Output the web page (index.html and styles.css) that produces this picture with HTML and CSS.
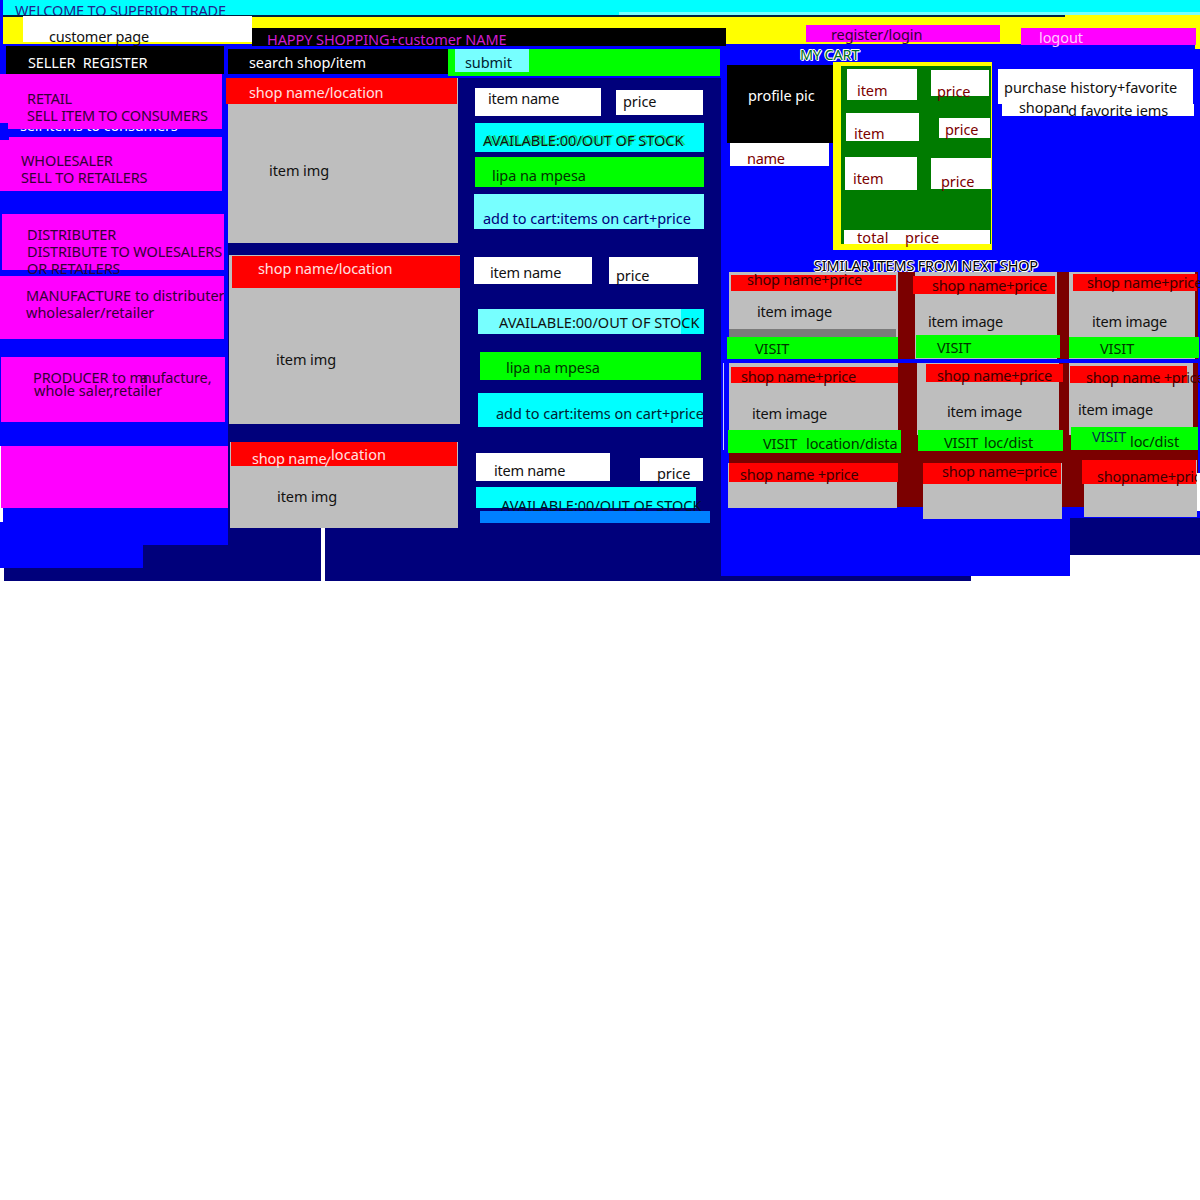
FILE: index.html
```html
<!DOCTYPE html>
<html lang="en">
<head>
<meta charset="utf-8">
<title>Superior Trade</title>
<link rel="stylesheet" href="styles.css">
</head>
<body>
<div class="page">
  <header>
    <div class="welcome"><p>WELCOME TO SUPERIOR TRADE</p></div>
    <div class="rule"></div>
    <div class="band">
      <div class="customer white"><p>customer page</p></div>
      <div class="happy"><p>HAPPY SHOPPING+customer NAME</p></div>
      <div class="login magenta"><p>register/login</p></div>
      <div class="logout magenta"><p>logout</p></div>
    </div>
  </header>
  <main>
    <aside class="sellers">
      <div class="seller-panel">
        <div class="seller-title"><p>SELLER&nbsp; REGISTER</p></div>
        <div class="s1 magenta"><p>RETAIL<br>SELL ITEM TO CONSUMERS</p></div>
        <div class="cut"><p>sell items to consumers</p></div>
        <div class="s2 magenta"><p>WHOLESALER<br>SELL TO RETAILERS</p></div>
        <div class="s3 magenta"><p>DISTRIBUTER<br>DISTRIBUTE TO WOLESALERS<br>OR RETAILERS</p></div>
        <div class="s4 magenta"><p>MANUFACTURE to distributer<br>wholesaler/retailer</p></div>
        <div class="s5 magenta"><p>PRODUCER to m<span class="over">a</span>nufacture,</p><p class="second">whole saler,retailer</p></div>
        <div class="s6 magenta"></div>
        <div class="notch white"></div>
      </div>
      <div class="seller-foot"><div class="step"></div></div>
    </aside>

    <section class="shop">
      <div class="search-row">
        <div class="search"><p>search shop/item</p></div>
        <div class="search-rest lime"><div class="submit pale"><p>submit</p></div></div>
      </div>
      <div class="products">
        <div class="product p1">
          <div class="figure"><div class="name red"><p>shop name/location</p></div><p class="img">item img</p></div>
          <div class="controls">
            <div class="pair"><div class="item white"><p>item name</p></div><div class="price white"><p>price</p></div></div>
            <div class="stock cyan"><p>AVAILABLE:00/OUT OF STOCK</p></div>
            <div class="pay lime"><p>lipa na mpesa</p></div>
            <div class="add pale"><p>add to cart:items on cart+price</p></div>
          </div>
        </div>
        <div class="product p2">
          <div class="figure"><div class="name red"><p>shop name/location</p></div><p class="img">item img</p></div>
          <div class="controls">
            <div class="pair"><div class="item white"><p>item name</p></div><div class="price white"><p>price</p></div></div>
            <div class="stock"><p>AVAILABLE:00/OUT OF STOCK</p></div>
            <div class="pay lime"><p>lipa na mpesa</p></div>
            <div class="add cyan"><p>add to cart:items on cart+price</p></div>
          </div>
        </div>
        <div class="product p3">
          <div class="figure"><div class="name red"><p>shop name</p><p class="slash">/</p><p class="loc">location</p></div><p class="img">item img</p></div>
          <div class="controls">
            <div class="pair"><div class="item white"><p>item name</p></div><div class="price white"><p>price</p></div></div>
            <div class="stock cyan"><p>AVAILABLE:00/OUT OF STOCK</p></div>
            <div class="strip"></div>
          </div>
        </div>
        <div class="gap white"></div>
      </div>
    </section>

    <section class="account">
      <div class="cart-title"><p>MY CART</p></div>
      <div class="account-row">
        <div class="profile">
          <div class="pic"><p>profile pic</p></div>
          <div class="user white"><p>name</p></div>
        </div>
        <div class="cart">
          <div class="cart-body">
            <div class="line l1"><div class="ci white"><p>item</p></div><div class="cp white"><p>price</p></div></div>
            <div class="line l2"><div class="ci white"><p>item</p></div><div class="cp white"><p>price</p></div></div>
            <div class="line l3"><div class="ci white"><p>item</p></div><div class="cp white"><p>price</p></div></div>
            <div class="total white"><p>total</p><p>price</p></div>
          </div>
        </div>
        <div class="history">
          <div class="h1 white"><p>purchase history+favorite</p></div>
          <div class="h2 white"><p>shopan</p><p class="low">d favorite iems</p></div>
        </div>
      </div>
      <div class="similar-title"><p>SIMILAR ITEMS FROM NEXT SHOP</p></div>
      <div class="market">
        <div class="row r1">
          <div class="card c1"><div class="tag red"><p>shop name+price</p></div><p class="pic-label">item image</p><div class="shade"></div><div class="visit lime"><p>VISIT</p></div></div>
          <div class="card c2"><div class="tag red"><p>shop name+price</p></div><p class="pic-label">item image</p><div class="visit lime"><p>VISIT</p></div></div>
          <div class="card c3"><div class="tag red"><p>shop name+price</p></div><p class="pic-label">item image</p><div class="visit lime"><p>VISIT</p></div></div>
        </div>
        <div class="divider"></div>
        <div class="row r2">
          <div class="card c1"><div class="tag red"><p>shop name+price</p></div><p class="pic-label">item image</p><div class="visit lime"><p>VISIT</p><p class="far">location/dista</p></div></div>
          <div class="card c2"><div class="tag red"><p>shop name+price</p></div><p class="pic-label">item image</p><div class="visit lime"><p>VISIT</p><p class="far">loc/dist</p></div></div>
          <div class="card c3"><div class="tag red"><p>shop name +price</p></div><p class="pic-label">item image</p><div class="visit lime"><p>VISIT</p><p class="far">loc/dist</p></div></div>
        </div>
        <div class="row r3">
          <div class="card c1"><div class="tag red"><p>shop name +price</p></div></div>
          <div class="card c2"><div class="tag red"><p>shop name=price</p></div></div>
          <div class="card c3"><div class="tag red"><p>shopname+price</p></div></div>
          <div class="edge white"></div>
        </div>
      </div>
      <div class="account-foot"><div class="under"></div><div class="corner"></div></div>
    </section>
  </main>
</div>
</body>
</html>
```
FILE: styles.css
```css
* { box-sizing: border-box; }
body { margin: 0; background: #fff; }
.page {
  width: 1200px; height: 1200px; overflow: hidden;
  font: 14.5px/17px "Noto Sans", sans-serif; color: #111;
  letter-spacing: -0.08px; white-space: nowrap;
}
p { margin: 0; width: max-content; flex: none; }
div { flex: none; }
.white { background: #fff; }
.magenta { background: #f0f; color: #350035; }
.lime { background: #0f0; color: #030; }
.cyan { background: #0ff; }
.pale { background: #7ff; }
.red { background: #f00; }

/* header */
header { position: relative; z-index: 1; display: flex; flex-direction: column; height: 44px; background: #ff0; border-left: 3px solid #00f; }
.welcome { height: 15px; background: linear-gradient(#7ff, #7ff) 616px 12px / 581px 3px no-repeat #0ff; overflow: hidden; color: #22228a; letter-spacing: -0.18px; }
.welcome p { margin: 2px 0 0 12px; }
.rule { width: 1062px; height: 2px; background: #002040; }
.band { display: flex; align-items: flex-start; height: 27px; }
.customer { width: 229px; height: 26px; margin: -1px 0 0 20px; letter-spacing: -0.2px; }
.customer p { margin: 12px 0 0 26px; }
.happy { width: 474px; height: 18px; margin-top: 11px; background: #000; color: #d01cd0; }
.happy p { margin: 3px 0 0 15px; }
.login { width: 194px; height: 17px; margin: 8px 0 0 80px; }
.login p { margin: 1px 0 0 25px; }
.logout { width: 175px; height: 17px; margin: 11px 0 0 21px; color: #ffc8ff; }
.logout p { margin: 1px 0 0 18px; }
.welcome, .customer, .happy, .login, .logout { display: flow-root; }

main { display: flex; align-items: flex-start; height: 537px; }

/* seller list */
.sellers { width: 228px; flex: none; letter-spacing: -0.14px; }
.seller-panel { display: flex; flex-direction: column; align-items: flex-start; height: 501px; background: #00f; }
.seller-panel > div { display: flow-root; }
.seller-title { width: 218px; height: 28px; margin: 2px 0 0 6px; background: #000; color: #fff; }
.seller-title p { margin: 8px 0 0 22px; }
.s1 { width: 222px; height: 55px; background: linear-gradient(#00f, #00f) 0 100% / 8px 6px no-repeat #f0f; }
.s1 p { margin: 16px 0 0 27px; }
.cut { height: 3px; margin-left: 20px; overflow: hidden; color: #fff; }
.cut p { margin-top: -12px; }
.s2 { width: 222px; height: 54px; margin-top: 5px; background: linear-gradient(#00f, #00f) 0 0 / 9px 3px no-repeat #f0f; }
.s2 p { margin: 15px 0 0 21px; }
.s3 { width: 222px; height: 56px; margin: 23px 0 0 2px; }
.s3 p { margin: 12px 0 0 25px; }
.s4 { width: 224px; height: 63px; margin-top: 6px; letter-spacing: 0; }
.s4 p { margin: 11px 0 0 26px; }
.s5 { width: 224px; height: 65px; margin: 18px 0 0 1px; }
.s5 p { margin: 12px 0 0 32px; }
.s5 .second { margin: -4px 0 0 33px; letter-spacing: 0; }
.over { margin: 0 -5px 0 -3px; }
.s6 { width: 229px; height: 62px; margin-top: 24px; border-left: 1px solid #fff; }
.notch { width: 3px; height: 14px; }
.seller-foot { height: 36px; margin-left: 4px; background: #00007b; }
.step { width: 143px; height: 23px; margin-left: -4px; background: #00f; }

/* products */
.shop { width: 493px; flex: none; display: flex; flex-direction: column; background: #00007b; }
.search-row { display: flex; align-items: flex-start; height: 34px; padding-top: 5px; background: #00f; }
.search { display: flow-root; width: 220px; height: 25px; background: #000; color: #fff; }
.search p { margin: 5px 0 0 21px; }
.search-rest { width: 272px; height: 27px; padding-left: 7px; }
.submit { display: flow-root; width: 74px; height: 23px; color: #023; }
.submit p { margin: 5px 0 0 10px; }
.products { height: 503px; }
.product { display: flex; align-items: flex-start; }
.p1 { height: 177px; }
.p2 { height: 187px; }
.p3 { height: 86px; }
.figure { display: flow-root; background: #bebebe; flex: none; }
.name { display: flow-root; color: #ffe0e0; }
.controls { display: flex; flex-direction: column; align-items: flex-start; }
.controls .pair { display: flex; align-items: flex-start; }
.item, .price, .stock, .pay, .add { display: flow-root; }
.item { letter-spacing: -0.25px; }
.stock { letter-spacing: 0; }
.add { letter-spacing: -0.04px; }

.p1 .figure { width: 230px; height: 165px; }
.p1 .name { width: 231px; height: 26px; margin-left: -2px; }
.p1 .name p { margin: 6px 0 0 23px; }
.p1 .img { margin: 58px 0 0 41px; }
.p1 .controls { margin: 10px 0 0 16px; }
.p1 .item { width: 126px; height: 28px; margin-left: 1px; }
.p1 .item p { margin: 2px 0 0 13px; }
.p1 .price { width: 87px; height: 25px; margin: 2px 0 0 15px; }
.p1 .price p { margin: 3px 0 0 7px; }
.p1 .stock { width: 229px; height: 29px; margin: 7px 0 0 1px; }
.p1 .stock p { margin: 9px 0 0 8px; text-shadow: 2px -1px #00e070; }
.p1 .pay { width: 229px; height: 30px; margin: 5px 0 0 1px; }
.p1 .pay p { margin: 10px 0 0 17px; }
.p1 .add { width: 230px; height: 35px; margin-top: 7px; color: #00007b; }
.p1 .add p { margin: 16px 0 0 9px; }

.p2 .figure { width: 231px; height: 169px; margin-left: 1px; }
.p2 .name { width: 228px; height: 32px; margin: 1px 0 0 3px; }
.p2 .name p { margin: 4px 0 0 26px; }
.p2 .img { margin: 63px 0 0 47px; }
.p2 .controls { margin: 2px 0 0 14px; }
.p2 .item { width: 118px; height: 27px; }
.p2 .item p { margin: 7px 0 0 16px; }
.p2 .price { width: 89px; height: 27px; margin-left: 17px; }
.p2 .price p { margin: 10px 0 0 7px; }
.p2 .stock { width: 226px; height: 25px; margin: 25px 0 0 4px; background: linear-gradient(90deg, #7ff 203px, #0ff 203px); }
.p2 .stock p { margin: 5px 0 0 21px; }
.p2 .pay { width: 221px; height: 28px; margin: 18px 0 0 6px; }
.p2 .pay p { margin: 7px 0 0 26px; }
.p2 .add { width: 225px; height: 34px; margin: 13px 0 0 4px; color: #023; }
.p2 .add p { margin: 12px 0 0 18px; }

.p3 .figure { width: 228px; height: 86px; margin-left: 2px; }
.p3 .name { display: flex; align-items: flex-start; width: 226px; height: 24px; margin-left: 1px; padding-left: 21px; }
.p3 .name p { margin-top: 8px; width: 73px; letter-spacing: -0.2px; }
.p3 .name .slash { width: 6px; margin-top: 11px; transform: skewX(-6deg); }
.p3 .name .loc { margin-top: 4px; width: auto; letter-spacing: 0.1px; }
.p3 .img { margin: 22px 0 0 47px; }
.p3 .controls { margin: 11px 0 0 18px; }
.p3 .item { width: 134px; height: 28px; }
.p3 .item p { margin: 9px 0 0 18px; }
.p3 .price { width: 63px; height: 23px; margin: 5px 0 0 30px; }
.p3 .price p { margin: 7px 0 0 17px; }
.p3 .stock { width: 220px; height: 21px; margin-top: 6px; color: #012; }
.p3 .stock p { margin: 10px 0 0 25px; }
.strip { width: 230px; height: 12px; margin: 3px 0 0 4px; background: #0080ff; }
.gap { width: 4px; height: 53px; margin-left: 93px; }

/* account */
.account { width: 479px; height: 537px; flex: none; display: flex; flex-direction: column; background: linear-gradient(#ccf, #ccf) 2px 318px / 1px 88px no-repeat, linear-gradient(#ff0, #ff0) 100% 0 / 5px 5px no-repeat #00f; }
.cart-title { display: flow-root; height: 18px; color: #006b20; }
.cart-title p { margin: 2px 0 0 79px; }
.cart-title p, .similar-title p { text-shadow: 1px 0 #fff, -1px 0 #fff, 0 1px #fff, 0 -1px #fff, 1px 1px #fff, -1px -1px #fff; letter-spacing: -0.2px; }
.account-row { display: flex; align-items: flex-start; height: 195px; }
.profile { width: 106px; margin: 3px 0 0 6px; }
.pic { display: flow-root; height: 78px; background: #000; color: #fff; }
.pic p { margin: 22px 0 0 21px; }
.user { display: flow-root; width: 99px; height: 23px; margin-left: 3px; color: #7b0000; letter-spacing: -0.3px; }
.user p { margin: 7px 0 0 17px; }
.cart { width: 159px; height: 188px; padding: 4px 1px 6px 8px; background: #ff0; color: #7b0000; }
.cart-body { display: flex; flex-direction: column; height: 178px; background: #007b00; }
.line { display: flex; align-items: flex-start; }
.ci, .cp { display: flow-root; }
.l1 { height: 47px; padding: 3px 0 0 6px; }
.l1 .ci { width: 70px; height: 31px; }
.l1 .ci p { margin: 13px 0 0 10px; }
.l1 .cp { width: 58px; height: 26px; margin: 1px 0 0 14px; }
.l1 .cp p { margin: 13px 0 0 6px; }
.l2 { height: 44px; padding-left: 5px; }
.l2 .ci { width: 73px; height: 28px; }
.l2 .ci p { margin: 12px 0 0 8px; }
.l2 .cp { width: 51px; height: 20px; margin: 5px 0 0 20px; }
.l2 .cp p { margin: 3px 0 0 6px; }
.l3 { height: 73px; padding-left: 4px; }
.l3 .ci { width: 72px; height: 33px; }
.l3 .ci p { margin: 13px 0 0 8px; }
.l3 .cp { width: 60px; height: 31px; margin: 1px 0 0 14px; }
.l3 .cp p { margin: 15px 0 0 10px; }
.total { display: flex; width: 146px; height: 14px; margin-left: 3px; padding-left: 13px; }
.total p { width: 48px; margin-top: -1px; letter-spacing: 0.1px; }
.history { margin: 7px 0 0 6px; }
.h1 { display: flow-root; width: 195px; height: 35px; }
.h1 p { margin: 10px 0 0 6px; letter-spacing: -0.04px; }
.h2 { display: flex; width: 192px; height: 12px; margin-left: 4px; padding-left: 17px; }
.h2 p { width: 49px; margin-top: -5px; }
.h2 .low { height: 14px; margin-top: -2px; overflow: hidden; width: 115px; }
.similar-title { display: flow-root; height: 15px; overflow: hidden; color: #000; }
.similar-title p { margin-left: 93px; }

/* neighbouring shops */
.market { width: 469px; height: 235px; margin-left: 8px; background: #7b0000; }
.row { display: flex; align-items: flex-start; }
.card { background: #bebebe; }
.card, .tag, .visit { display: flow-root; }
.tag { color: #3c0000; letter-spacing: -0.22px; }
.pic-label { letter-spacing: -0.2px; }
.divider { width: 479px; height: 4px; margin-left: -8px; background: #00f; }
.r1 { height: 87px; }
.r1 .card { height: 87px; }
.r1 .c1 { width: 169px; }
.r1 .c1 .tag { width: 165px; height: 16px; margin: 3px 0 0 2px; }
.r1 .c1 .tag p { margin: -4px 0 0 16px; }
.r1 .c1 .pic-label { margin: 12px 0 0 28px; }
.shade { width: 167px; height: 8px; margin-top: 9px; background: #7b7b7b; }
.r1 .c1 .visit { width: 171px; height: 22px; margin-left: -2px; }
.r1 .c1 .visit p { margin: 3px 0 0 28px; }
.r1 .c2 { width: 142px; margin-left: 17px; }
.r1 .c2 .tag { width: 142px; height: 18px; margin: 4px 0 0 -2px; }
.r1 .c2 .tag p { margin: 1px 0 0 19px; }
.r1 .c2 .pic-label { margin: 19px 0 0 13px; }
.r1 .c2 .visit { width: 144px; height: 23px; margin: 5px 0 0 1px; }
.r1 .c2 .visit p { margin: 4px 0 0 21px; }
.r1 .c3 { width: 126px; margin-left: 12px; }
.r1 .c3 .tag { width: 124px; height: 17px; margin: 2px 0 0 4px; }
.r1 .c3 .tag p { margin: 0 0 0 14px; }
.r1 .c3 .pic-label { margin: 22px 0 0 23px; }
.r1 .c3 .visit { width: 130px; height: 21px; margin-top: 7px; }
.r1 .c3 .visit p { margin: 3px 0 0 31px; }

.r2 { height: 97px; }
.r2 .card { height: 72px; }
.r2 .visit { display: flex; align-items: flex-start; }
.r2 .c1 { width: 169px; }
.r2 .c1 .tag { width: 167px; height: 16px; margin: 4px 0 0 2px; }
.r2 .c1 .tag p { margin: 1px 0 0 10px; }
.r2 .c1 .pic-label { margin: 22px 0 0 23px; }
.r2 .c1 .visit { width: 173px; height: 23px; margin: 8px 0 0 -1px; padding: 5px 0 0 35px; }
.r2 .c1 .visit p { width: 43px; }
.r2 .c1 .visit .far { width: auto; }
.r2 .c2 { width: 142px; margin-left: 19px; }
.r2 .c2 .tag { width: 137px; height: 18px; margin: 1px 0 0 9px; }
.r2 .c2 .tag p { margin: 3px 0 0 11px; }
.r2 .c2 .pic-label { margin: 21px 0 0 30px; }
.r2 .c2 .visit { width: 145px; height: 21px; margin: 10px 0 0 1px; padding: 4px 0 0 26px; }
.r2 .c2 .visit p { width: 40px; }
.r2 .c3 { width: 124px; margin-left: 10px; }
.r2 .c3 .tag { width: 117px; height: 17px; margin: 3px 0 0 1px; }
.r2 .c3 .tag p { margin: 3px 0 0 16px; }
.r2 .c3 .pic-label { margin: 18px 0 0 9px; }
.r2 .c3 .visit { width: 127px; height: 23px; margin: 9px 0 0 2px; padding: 1px 0 0 21px; }
.r2 .c3 .visit p { width: 38px; color: #00304a; }
.r2 .c3 .visit .far { margin-top: 5px; color: #030; }

.r3 { height: 47px; }
.r3 .c1 { width: 169px; height: 45px; margin: 3px 0 0 -1px; }
.r3 .c1 .tag { width: 169px; height: 19px; margin-left: 1px; }
.r3 .c1 .tag p { margin: 3px 0 0 11px; }
.r3 .c2 { width: 139px; height: 56px; margin: 3px 0 0 26px; }
.r3 .c2 .tag { width: 138px; height: 21px; }
.r3 .c2 .tag p { margin: 0 0 0 19px; }
.r3 .c3 { width: 113px; height: 57px; margin-left: 22px; }
.r3 .c3 .tag { width: 114px; height: 24px; margin-left: -2px; }
.r3 .c3 .tag p { margin: 8px 0 0 15px; }
.edge { width: 3px; height: 38px; margin-top: 13px; }

.account-foot { display: flex; align-items: flex-end; height: 63px; margin-top: 11px; }
.under { width: 349px; height: 5px; background: linear-gradient(90deg, #00007b 250px, #fff 250px); }
.corner { width: 130px; height: 63px; background: linear-gradient(#00007b 37px, #fff 37px); }
```
